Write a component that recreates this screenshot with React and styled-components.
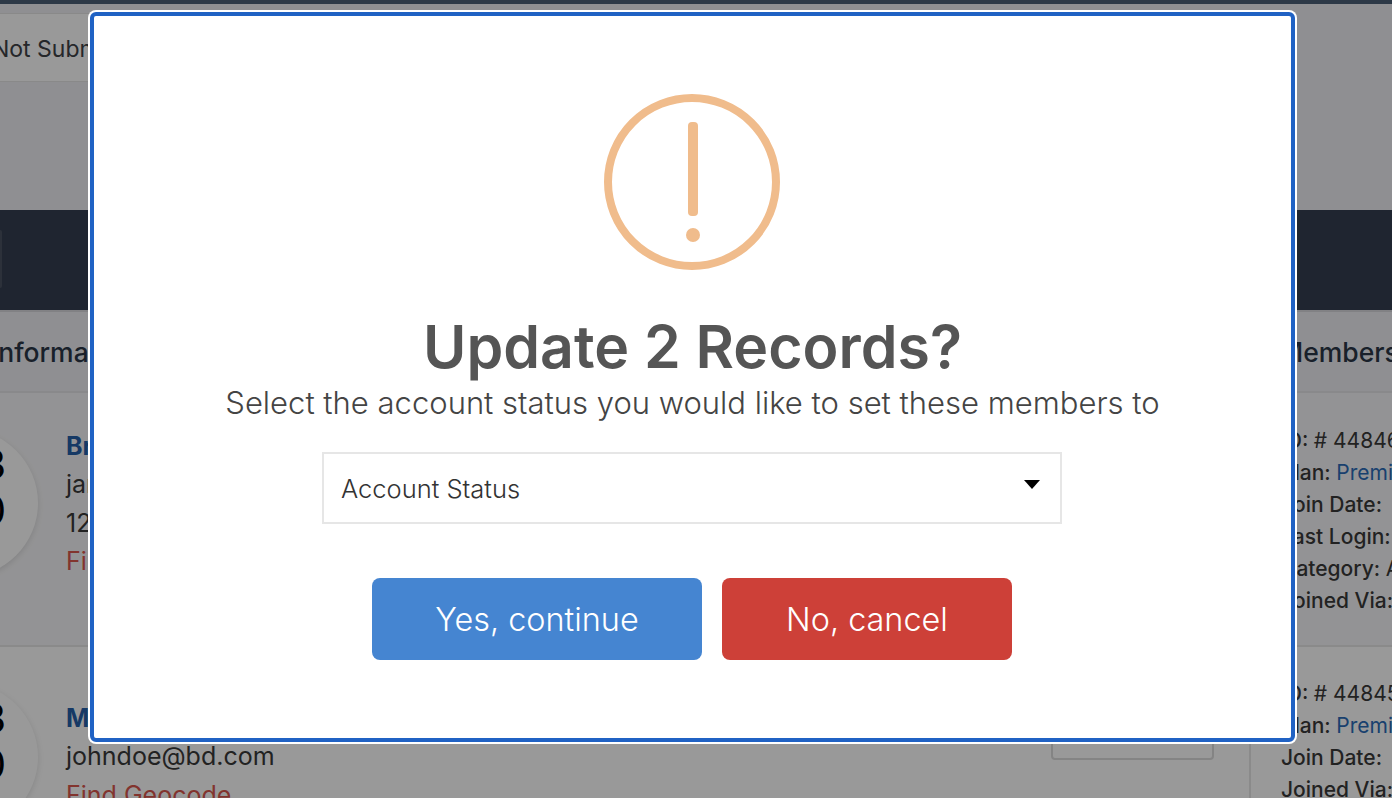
import React from "react";
import styled, { createGlobalStyle } from "styled-components";

const FONT = `Inter, "Noto Sans", "Liberation Sans", sans-serif`;

const Global = createGlobalStyle`
  html, body { margin: 0; padding: 0; height: 100%; overflow: hidden; background: #fff; }
  #root { height: 100%; }
  * { box-sizing: border-box; }
`;

const Page = styled.div`
  position: relative;
  width: 1392px;
  height: 798px;
  overflow: hidden;
  font-family: ${FONT};
  color: #333;
  background: #fff;
`;
const TopBar = styled.div`
  height: 4px;
  background: #4c5f77;
`;
const Header = styled.div`
  height: 206px;
  background: #eeeff3;
  padding-top: 9px;
`;
const StatusTab = styled.div`
  width: 240px;
  height: 69px;
  margin-left: -148px;
  padding: 2px 0 0 140px;
  display: flex;
  align-items: center;
  white-space: nowrap;
  font-size: 23px;
  color: #3e4146;
  background: #fff;
  border-top: 1px solid #e4e4e4;
  border-bottom: 1px solid #e4e4e4;
`;
const Toolbar = styled.div`
  height: 100px;
  background: #343f50;
  display: flex;
  align-items: center;
`;
const ToolbarButton = styled.div`
  width: 2px;
  height: 58px;
  margin-top: -2px;
  background: #4a5361;
  border-radius: 0 3px 3px 0;
`;
const TableHead = styled.div`
  height: 83px;
  background: #eeeff3;
  border-top: 2px solid #d8d8dc;
  border-bottom: 2px solid #e4e4e8;
  display: flex;
  align-items: center;
  justify-content: space-between;
  font-size: 26.5px;
  font-weight: 500;
  color: #2a3647;
  white-space: nowrap;
`;
const HeadLeft = styled.span`
  margin-left: -9px;
`;
const HeadRight = styled.span`
  width: 113px;
  overflow: hidden;
`;
const Row = styled.div`
  height: ${(p) => p.$h}px;
  display: flex;
  background: ${(p) => p.$bg};
  border-bottom: 2px solid #e6e6e6;
  overflow: hidden;
`;
const Avatar = styled.div`
  flex: none;
  width: 148px;
  height: 148px;
  margin: 36px 28px 0 -110px;
  border-radius: 50%;
  background: #fff;
  box-shadow: 0 2px 6px rgba(0, 0, 0, 0.12);
  display: flex;
  flex-direction: column;
  align-items: flex-end;
  justify-content: flex-start;
  padding: 12px 32px 0 0;
  font-size: 41px;
  font-weight: 400;
  line-height: 46px;
  color: #000;
`;
const Info = styled.div`
  flex: 1;
  padding-top: ${(p) => p.$top}px;
  font-size: 25px;
  line-height: 38.3px;
  color: #3a3a3a;
`;
const Name = styled.div`
  font-weight: 700;
  color: #2560a8;
`;
const Geocode = styled.div`
  color: #d9584e;
`;
const Action = styled.div`
  flex: none;
  width: 163px;
  height: 60px;
  margin: 53px 35px 0 0;
  border: 2px solid #dcdcdc;
  border-radius: 4px;
`;
const Details = styled.div`
  flex: none;
  width: 143px;
  padding: ${(p) => p.$top}px 0 0 30px;
  border-left: 2px solid #e6e6e6;
  font-size: 21px;
  line-height: 32px;
  font-weight: 500;
  color: #3a3a3a;
  white-space: nowrap;
  overflow: hidden;
`;
const Value = styled.span`
  font-weight: 400;
  margin-left: ${(p) => p.$gap || 0}px;
  color: ${(p) => p.$color || "#3a3a3a"};
`;

const Backdrop = styled.div`
  position: absolute;
  inset: 0;
  background: rgba(0, 0, 0, 0.4);
`;
const Modal = styled.div`
  position: absolute;
  left: 90px;
  top: 12px;
  width: 1205px;
  height: 730px;
  border: 4px solid #2062c4;
  border-radius: 6px;
  background: #fff;
  box-shadow: 0 0 0 2px #fff;
  display: flex;
  flex-direction: column;
  align-items: center;
  padding-top: 78px;
  font-family: ${FONT};
`;
const Alert = styled.svg`
  display: block;
  flex: none;
  width: 176px;
  height: 176px;
  margin-left: -1px;
`;
const Title = styled.h2`
  margin: 43px 0 0;
  font-size: 59px;
  line-height: 68px;
  font-weight: 600;
  color: #555;
  white-space: nowrap;
`;
const Subtitle = styled.p`
  margin: 0;
  font-size: 31px;
  line-height: 44px;
  font-weight: 300;
  color: #444;
  white-space: nowrap;
`;
const Select = styled.div`
  flex: none;
  width: 740px;
  height: 72px;
  margin-top: 27px;
  margin-left: -1px;
  padding: 0 20px 0 17px;
  border: 2px solid #e6e6e6;
  display: flex;
  align-items: center;
  justify-content: space-between;
  font-size: 25.5px;
  font-weight: 300;
  color: #333;
`;
const Caret = styled.svg`
  width: 16px;
  height: 9px;
  margin-top: -8px;
`;
const Buttons = styled.div`
  display: flex;
  gap: 20px;
  margin-top: 54px;
  margin-left: -1px;
`;
const Button = styled.div`
  width: ${(p) => p.$w}px;
  height: 82px;
  border-radius: 8px;
  background: ${(p) => p.$bg};
  color: #fff;
  display: flex;
  align-items: center;
  justify-content: center;
  font-size: 32.4px;
  font-weight: 300;
`;

export default function App() {
  return (
    <Page>
      <Global />
      <TopBar />
      <Header>
        <StatusTab>Not Submitted</StatusTab>
      </Header>
      <Toolbar>
        <ToolbarButton />
      </Toolbar>
      <TableHead>
        <HeadLeft>Information</HeadLeft>
        <HeadRight>Members</HeadRight>
      </TableHead>
      <Row $h={254} $bg="#f6f6f8">
        <Avatar>
          <span>3</span>
          <span>0</span>
        </Avatar>
        <Info $top={34}>
          <Name>Brian Smith</Name>
          <div>jane@bd.com</div>
          <div>1234567890</div>
          <Geocode>Find Geocode</Geocode>
        </Info>
        <Details $top={32}>
          <div>ID: <Value># 44846</Value></div>
          <div>Plan: <Value $color="#2a6cb8">Premium</Value></div>
          <div>Join Date: <Value $gap={8}>2021</Value></div>
          <div>Last Login: <Value $gap={8}>2021</Value></div>
          <div>Category: <Value>All</Value></div>
          <div>Joined Via: <Value $gap={8}>Web</Value></div>
        </Details>
      </Row>
      <Row $h={160} $bg="#ffffff">
        <Avatar>
          <span>3</span>
          <span>0</span>
        </Avatar>
        <Info $top={52}>
          <Name>Mary Doe</Name>
          <div>johndoe@bd.com</div>
          <Geocode>Find Geocode</Geocode>
        </Info>
        <Action />
        <Details $top={31}>
          <div>ID: <Value># 44845</Value></div>
          <div>Plan: <Value $color="#2a6cb8">Premium</Value></div>
          <div>Join Date: <Value $gap={8}>2021</Value></div>
          <div>Joined Via: <Value $gap={8}>Web</Value></div>
        </Details>
      </Row>
      <Backdrop />
      <Modal>
        <Alert viewBox="0 0 176 176" aria-hidden="true">
          <circle cx="88" cy="88" r="84" fill="none" stroke="#f0bc8c" strokeWidth="8" />
          <rect x="84" y="28" width="10" height="94" rx="4" fill="#f0bc8c" />
          <circle cx="89" cy="141" r="7" fill="#f0bc8c" />
        </Alert>
        <Title>Update 2 Records?</Title>
        <Subtitle>Select the account status you would like to set these members to</Subtitle>
        <Select>
          <span>Account Status</span>
          <Caret viewBox="0 0 16 9" aria-hidden="true">
            <path d="M0 0H16L8 9Z" fill="#000" />
          </Caret>
        </Select>
        <Buttons>
          <Button $w={330} $bg="#4585d1">Yes, continue</Button>
          <Button $w={290} $bg="#cd4038">No, cancel</Button>
        </Buttons>
      </Modal>
    </Page>
  );
}
